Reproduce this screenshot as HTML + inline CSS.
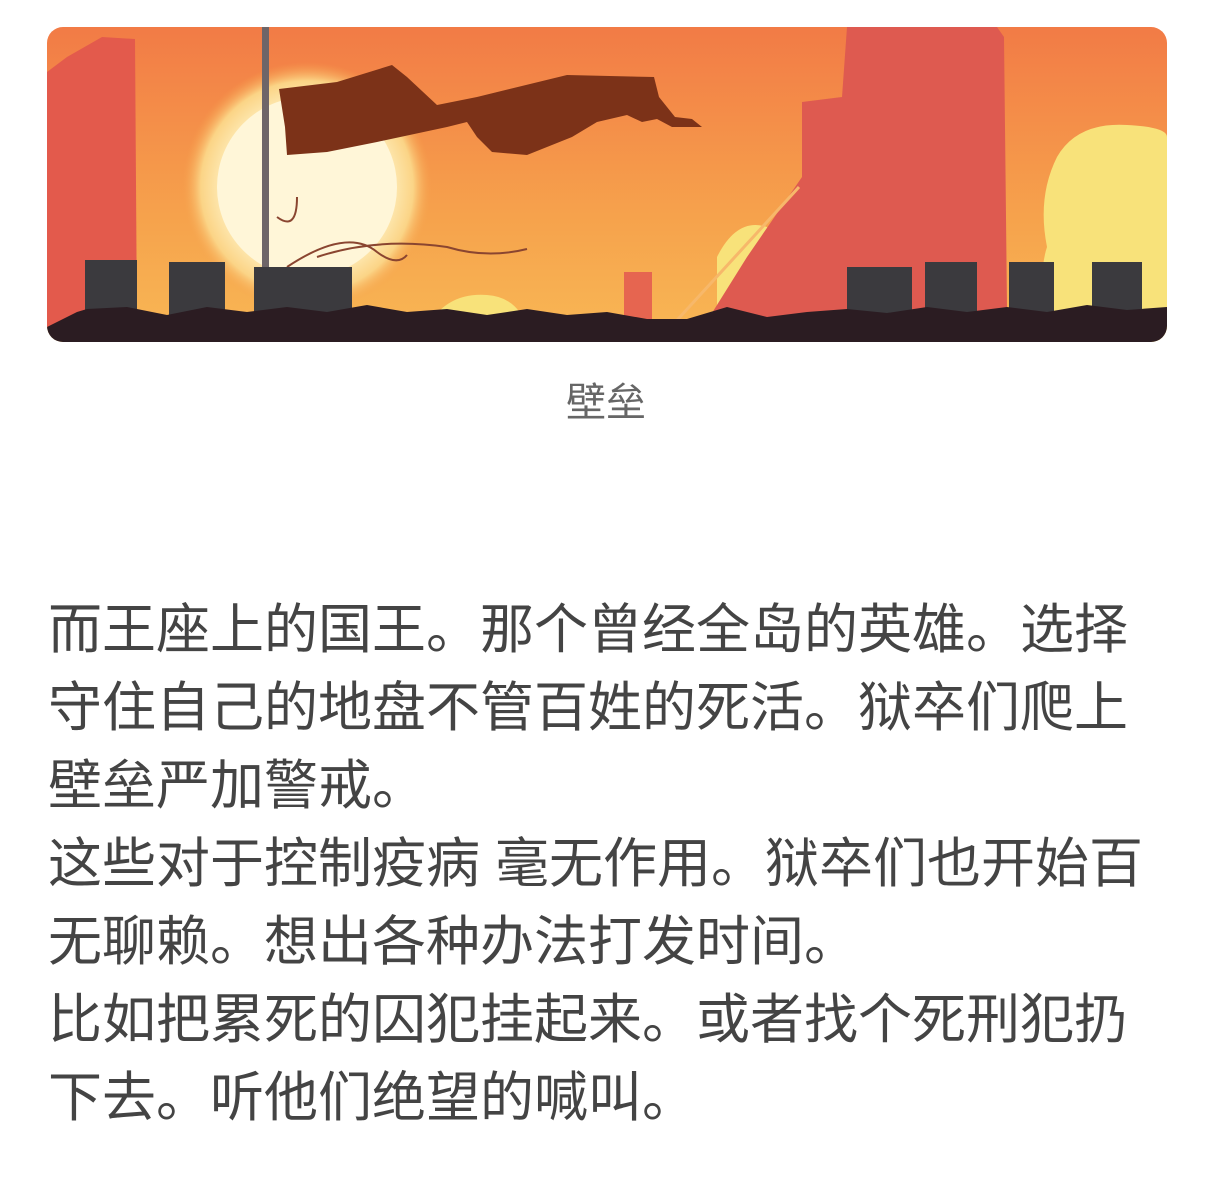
<!DOCTYPE html>
<html><head><meta charset="utf-8"><style>
html,body{margin:0;padding:0;background:#fff;width:1212px;height:1181px;overflow:hidden}
.img{position:absolute;left:47px;top:27px;width:1120px;height:315px;border-radius:16px;overflow:hidden}
.cap{position:absolute;left:0;width:1212px;top:378px;text-align:center;font:40px "Liberation Sans","Noto Sans CJK SC",sans-serif;color:#666;line-height:50px}
.txt{position:absolute;left:48px;top:591px;width:1140px;font:54px/78px "Liberation Sans","Noto Sans CJK SC",sans-serif;color:#444;white-space:nowrap}
</style></head><body>
<div class="img">
<svg width="1120" height="315" viewBox="0 0 1120 315">
<defs>
<linearGradient id="bg" x1="0" y1="0" x2="0" y2="1"><stop offset="0" stop-color="#f27b46"/><stop offset="0.6" stop-color="#f6a24c"/><stop offset="1" stop-color="#f8b855"/></linearGradient>
<radialGradient id="sun" cx="0.5" cy="0.5" r="0.5"><stop offset="0" stop-color="#fffbe8"/><stop offset="0.6" stop-color="#fff3c8"/><stop offset="0.85" stop-color="#fbd486"/><stop offset="1" stop-color="#f6a24c" stop-opacity="0"/></radialGradient>
</defs>
<rect width="1120" height="315" fill="url(#bg)"/>
<circle cx="260" cy="160" r="125" fill="url(#sun)"/>
<circle cx="260" cy="160" r="90" fill="#fff6d8"/>
<path d="M1010 130 Q1030 95 1080 98 Q1120 100 1120 110 L1120 315 L1000 315 Q990 250 1000 220 Q990 170 1010 130Z" fill="#f8e27a"/>
<path d="M670 230 Q690 190 720 200 L760 270 L720 300 L670 300Z" fill="#f8e27a"/>
<path d="M380 300 Q400 265 440 268 Q470 270 480 300Z" fill="#f8e27a"/>
<path d="M680 300 Q700 255 760 262 Q800 265 810 300Z" fill="#f8e27a"/>
<path d="M0 45 L20 30 L55 10 L88 12 L90 300 L0 300Z" fill="#e35a4c"/>
<path d="M800 0 L950 0 L957 10 L960 280 L920 300 L650 310 L700 230 L755 150 L755 75 L795 70Z" fill="#de5a50"/>
<path d="M610 315 L752 160" stroke="#f7b86a" stroke-width="3"/>
<rect x="577" y="245" width="28" height="70" fill="#e66550"/>
<rect x="215" y="0" width="7" height="300" fill="#6e6568"/>
<path d="M232 62 L290 55 L345 38 L360 50 L390 78 L430 70 L520 48 L607 50 L612 70 L628 90 L645 92 L655 100 L625 100 L610 92 L595 95 L580 88 L550 95 L525 110 L480 128 L445 125 L430 110 L420 95 L400 100 L330 115 L280 125 L240 128 L238 100Z" fill="#7c3218"/>
<path d="M230 190 Q250 205 250 170 M240 240 Q300 200 330 225 Q350 240 360 228 M270 230 Q330 210 400 220 Q440 232 480 222" stroke="#8a4530" stroke-width="2" fill="none"/>
<g fill="#3b3a3e">
<rect x="38" y="233" width="52" height="70"/><rect x="122" y="235" width="56" height="70"/><rect x="207" y="240" width="98" height="70"/>
<rect x="800" y="240" width="65" height="70"/><rect x="878" y="235" width="52" height="70"/><rect x="962" y="235" width="45" height="70"/><rect x="1045" y="235" width="50" height="70"/>
</g>
<path d="M0 300 L30 285 L40 282 L80 280 L120 288 L160 280 L200 285 L240 280 L280 285 L320 278 L360 285 L400 282 L440 288 L480 282 L520 288 L560 285 L600 292 L640 292 L680 280 L720 290 L760 285 L800 282 L840 286 L880 280 L920 285 L960 280 L1000 285 L1040 278 L1080 283 L1120 280 L1120 315 L0 315Z" fill="#2b1c22"/>
</svg>
</div>
<div class="cap">壁垒</div>
<div class="txt">而王座上的国王。那个曾经全岛的英雄。选择<br>守住自己的地盘不管百姓的死活。狱卒们爬上<br>壁垒严加警戒。<br>这些对于控制疫病 毫无作用。狱卒们也开始百<br>无聊赖。想出各种办法打发时间。<br>比如把累死的囚犯挂起来。或者找个死刑犯扔<br>下去。听他们绝望的喊叫。</div>
</body></html>
